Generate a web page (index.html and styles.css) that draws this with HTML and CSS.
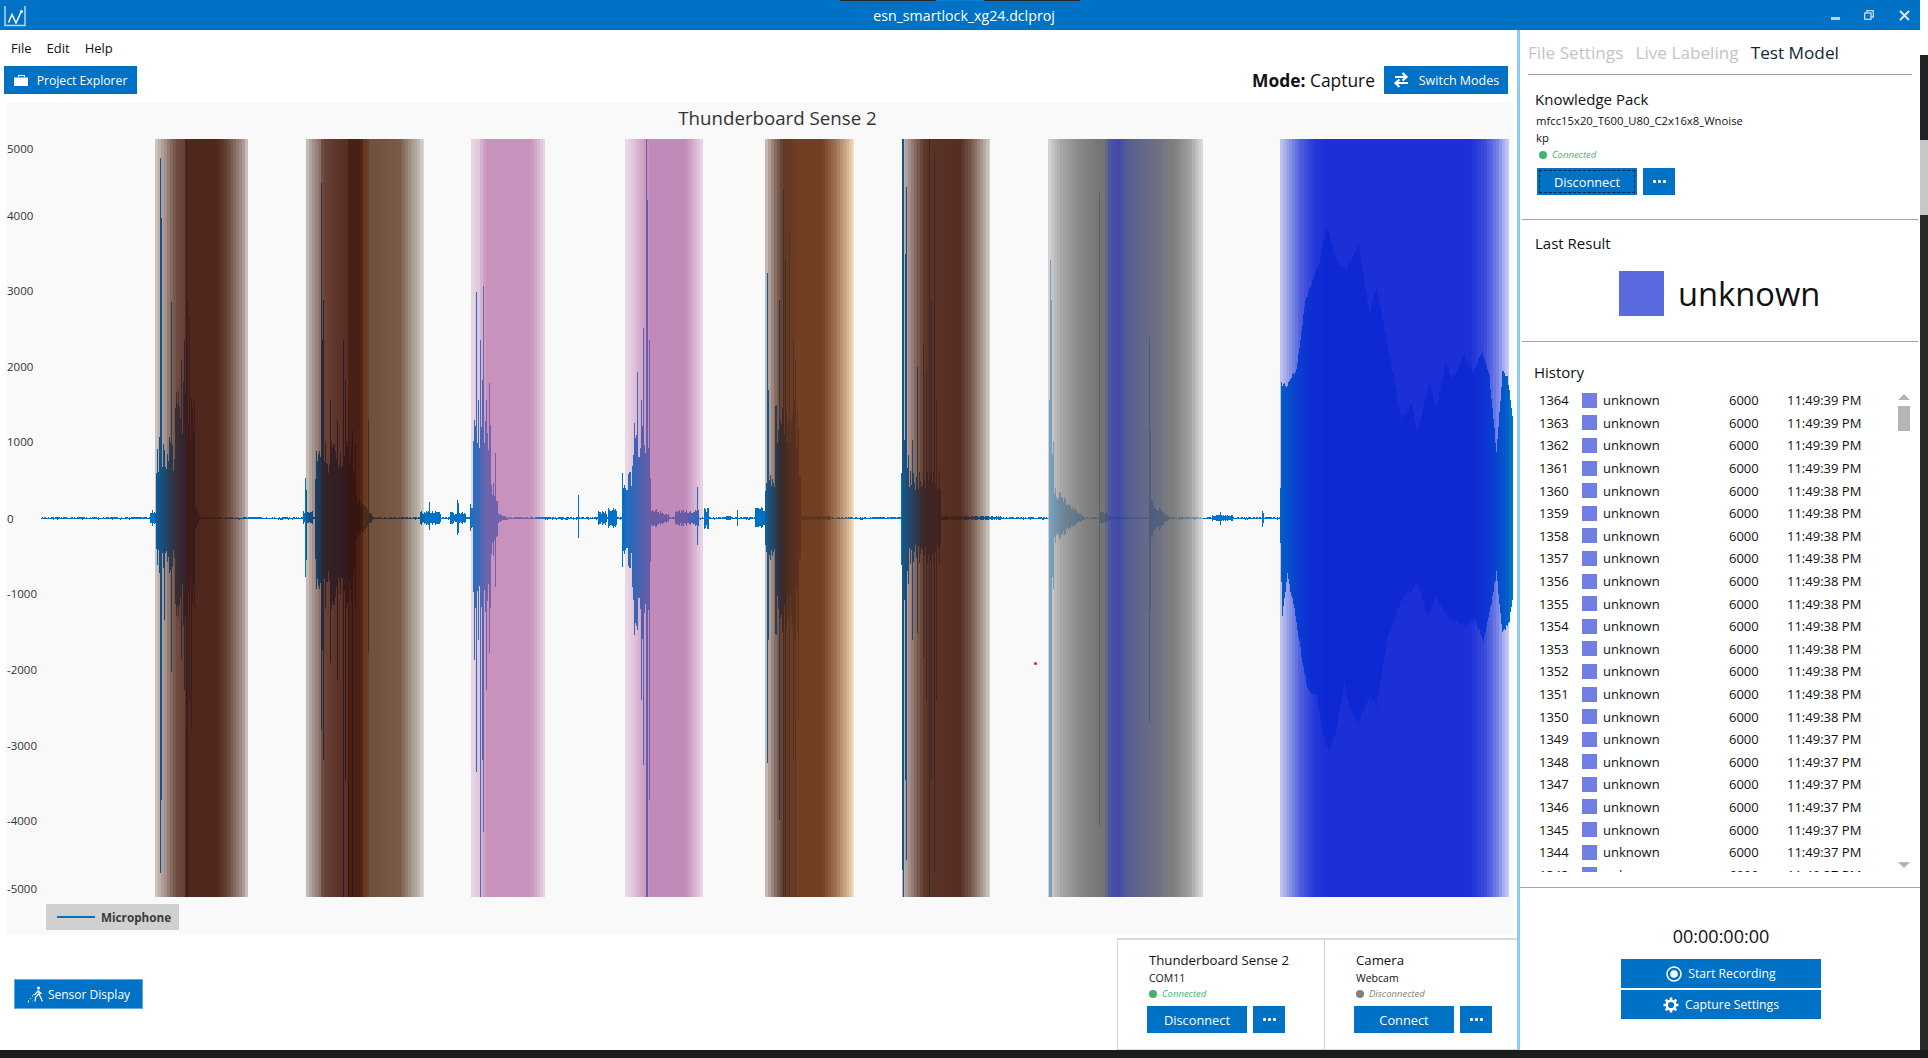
FILE: index.html
```html
<!DOCTYPE html>
<html lang="en">
<head>
    <meta charset="UTF-8">
    <title>esn_smartlock_xg24.dclproj</title>
    <link rel="stylesheet" href="styles.css">
</head>
<body>
    <div class="screen">
        <div class="window">
            <header class="titlebar">
                <svg class="app-logo" viewBox="0 0 22 22" fill="none">
                    <path d="M1 1V20.500H21V1" stroke="#b5d6f0" stroke-width="1.500"/>
                    <path d="M4.500 17.500L8 9.500L12 18L17 7" stroke="#fff" stroke-width="1.500"/>
                    <circle cx="17.500" cy="6.500" r="1.500" fill="#fff"/>
                </svg>
                <div class="title-tabs"><i class="dark"></i><i class="lit"></i><i class="dark"></i></div>
                <span class="title-text">esn_smartlock_xg24.dclproj</span>
                <div class="window-controls">
                    <svg class="win-min" viewBox="0 0 9 3"><rect width="9" height="3" fill="#b9d5ec"/></svg>
                    <svg class="win-restore" viewBox="0 0 10 10" fill="none" stroke="#c5dcef" stroke-width="1.300"><rect x="0.700" y="3" width="6.300" height="6.300"/><path d="M3 3V0.700H9.300V7H7"/></svg>
                    <svg class="win-close" viewBox="0 0 11 11" fill="none" stroke="#d5e6f4" stroke-width="2"><path d="M1 1L10 10M10 1L1 10"/></svg>
                </div>
            </header>

            <div class="workspace">
                <main class="main">
                    <nav class="menu">
                        <span>File</span>
                        <span>Edit</span>
                        <span>Help</span>
                    </nav>

                    <div class="toolbar">
                        <button class="btn btn-explorer">
                            <svg class="icon-case" viewBox="0 0 14 12"><path d="M0 3.500H14V12H0Z M4 3V1H11V3H10V2H5V3Z" fill="#fff"/></svg>
                            Project Explorer
                        </button>
                        <div class="mode">
                            <span class="mode-label"><b>Mode:</b> Capture</span>
                            <button class="btn btn-switch">
                                <svg class="icon-switch" viewBox="0 0 16 16" fill="none" stroke="#fff" stroke-width="2.200"><path d="M2 5H13M9.500 1L13.500 5L9.500 8.500"/><path d="M15 11H3M6.500 7.500L2.500 11L6.500 15"/></svg>
                                Switch Modes
                            </button>
                        </div>
                    </div>

                    <section class="chart" id="chart">
                        <h2 class="chart-title">Thunderboard Sense 2</h2>
                        <div class="legend"><i class="legend-line"></i><b>Microphone</b></div>
                    </section>

                    <div class="bottom-bar">
                        <button class="btn btn-sensor">
                            <svg class="icon-sensor" viewBox="0 0 17 17" fill="none" stroke="#fff" stroke-width="1.200">
                                <circle cx="11.500" cy="2" r="1.500" fill="#fff" stroke="none"/>
                                <path d="M11.500 4.500L8.500 8L6.500 9M11.500 4.500L12.500 9L15.500 15.500M11.500 8L8.500 11.500L8 15.500M11.500 5L14.500 8"/>
                                <path d="M1 15H3M3 12.500H5M5 10H6.500M5.500 15H6M1 16H2" stroke-dasharray="1 1"/>
                            </svg>
                            Sensor Display
                        </button>
                        <div class="devices">
                            <div class="device">
                                <div class="device-name">Thunderboard Sense 2</div>
                                <div class="device-sub">COM11</div>
                                <div class="status on"><i></i>Connected</div>
                                <div class="btn-row">
                                    <button class="btn btn-connect">Disconnect</button>
                                    <button class="btn btn-more"><i></i><i></i><i></i></button>
                                </div>
                            </div>
                            <div class="device device-camera">
                                <div class="device-name">Camera</div>
                                <div class="device-sub">Webcam</div>
                                <div class="status off"><i></i>Disconnected</div>
                                <div class="btn-row">
                                    <button class="btn btn-connect">Connect</button>
                                    <button class="btn btn-more"><i></i><i></i><i></i></button>
                                </div>
                            </div>
                        </div>
                    </div>
                </main>

                <aside class="side">
                    <div class="tabs">
                        <span>File Settings</span>
                        <span>Live Labeling</span>
                        <span class="active">Test Model</span>
                    </div>

                    <section class="kp">
                        <div class="heading">Knowledge Pack</div>
                        <div class="kp-name kp-first">mfcc15x20_T600_U80_C2x16x8_Wnoise</div>
                        <div class="kp-name">kp</div>
                        <div class="status on"><i></i>Connected</div>
                        <div class="btn-row">
                            <button class="btn btn-connect focused">Disconnect</button>
                            <button class="btn btn-more"><i></i><i></i><i></i></button>
                        </div>
                    </section>

                    <section class="last-result">
                        <div class="heading">Last Result</div>
                        <div class="result">
                            <i class="result-swatch"></i>
                            <span>unknown</span>
                        </div>
                    </section>

                    <section class="history">
                        <div class="heading">History</div>
                        <div class="history-list">
                            <div class="row"><span class="c-id">1364</span><i></i><span class="c-label">unknown</span><span class="c-size">6000</span><span>11:49:39 PM</span></div>
                            <div class="row"><span class="c-id">1363</span><i></i><span class="c-label">unknown</span><span class="c-size">6000</span><span>11:49:39 PM</span></div>
                            <div class="row"><span class="c-id">1362</span><i></i><span class="c-label">unknown</span><span class="c-size">6000</span><span>11:49:39 PM</span></div>
                            <div class="row"><span class="c-id">1361</span><i></i><span class="c-label">unknown</span><span class="c-size">6000</span><span>11:49:39 PM</span></div>
                            <div class="row"><span class="c-id">1360</span><i></i><span class="c-label">unknown</span><span class="c-size">6000</span><span>11:49:38 PM</span></div>
                            <div class="row"><span class="c-id">1359</span><i></i><span class="c-label">unknown</span><span class="c-size">6000</span><span>11:49:38 PM</span></div>
                            <div class="row"><span class="c-id">1358</span><i></i><span class="c-label">unknown</span><span class="c-size">6000</span><span>11:49:38 PM</span></div>
                            <div class="row"><span class="c-id">1357</span><i></i><span class="c-label">unknown</span><span class="c-size">6000</span><span>11:49:38 PM</span></div>
                            <div class="row"><span class="c-id">1356</span><i></i><span class="c-label">unknown</span><span class="c-size">6000</span><span>11:49:38 PM</span></div>
                            <div class="row"><span class="c-id">1355</span><i></i><span class="c-label">unknown</span><span class="c-size">6000</span><span>11:49:38 PM</span></div>
                            <div class="row"><span class="c-id">1354</span><i></i><span class="c-label">unknown</span><span class="c-size">6000</span><span>11:49:38 PM</span></div>
                            <div class="row"><span class="c-id">1353</span><i></i><span class="c-label">unknown</span><span class="c-size">6000</span><span>11:49:38 PM</span></div>
                            <div class="row"><span class="c-id">1352</span><i></i><span class="c-label">unknown</span><span class="c-size">6000</span><span>11:49:38 PM</span></div>
                            <div class="row"><span class="c-id">1351</span><i></i><span class="c-label">unknown</span><span class="c-size">6000</span><span>11:49:38 PM</span></div>
                            <div class="row"><span class="c-id">1350</span><i></i><span class="c-label">unknown</span><span class="c-size">6000</span><span>11:49:38 PM</span></div>
                            <div class="row"><span class="c-id">1349</span><i></i><span class="c-label">unknown</span><span class="c-size">6000</span><span>11:49:37 PM</span></div>
                            <div class="row"><span class="c-id">1348</span><i></i><span class="c-label">unknown</span><span class="c-size">6000</span><span>11:49:37 PM</span></div>
                            <div class="row"><span class="c-id">1347</span><i></i><span class="c-label">unknown</span><span class="c-size">6000</span><span>11:49:37 PM</span></div>
                            <div class="row"><span class="c-id">1346</span><i></i><span class="c-label">unknown</span><span class="c-size">6000</span><span>11:49:37 PM</span></div>
                            <div class="row"><span class="c-id">1345</span><i></i><span class="c-label">unknown</span><span class="c-size">6000</span><span>11:49:37 PM</span></div>
                            <div class="row"><span class="c-id">1344</span><i></i><span class="c-label">unknown</span><span class="c-size">6000</span><span>11:49:37 PM</span></div>
                            <div class="row"><span class="c-id">1343</span><i></i><span class="c-label">unknown</span><span class="c-size">6000</span><span>11:49:37 PM</span></div>
                        </div>
                        <div class="scroll">
                            <i class="arrow-up"></i>
                            <i class="thumb"></i>
                            <i class="arrow-down"></i>
                        </div>
                    </section>

                    <section class="capture">
                        <div class="timer">00:00:00:00</div>
                        <button class="btn btn-capture">
                            <svg class="icon-rec" viewBox="0 0 16 16" fill="none"><circle cx="8" cy="8" r="7" stroke="#fff" stroke-width="1.500"/><circle cx="8" cy="8" r="3.800" fill="#fff"/></svg>
                            Start Recording
                        </button>
                        <button class="btn btn-capture">
                            <svg class="icon-gear" viewBox="0 0 16 16" fill="none" stroke="#fff"><circle cx="8" cy="8" r="4.300" stroke-width="2.400"/><path d="M8 0.500V3M8 13V15.500M0.500 8H3M13 8H15.500M2.700 2.700L4.500 4.500M11.500 11.500L13.300 13.300M13.300 2.700L11.500 4.500M4.500 11.500L2.700 13.300" stroke-width="2.600"/></svg>
                            Capture Settings
                        </button>
                    </section>
                </aside>
            </div>
        </div>
        <div class="edge">
            <i class="edge-blank"></i>
            <i class="edge-dark"></i>
            <i class="edge-light"></i>
            <i class="edge-rest"></i>
        </div>
    </div>
    <div class="taskbar"></div>

    <script src="chart.js"></script>
</body>
</html>
```

FILE: styles.css
```css
* {
    box-sizing: border-box;
}
body {
    margin: 0;
    font-family: "Open Sans", "Noto Sans", sans-serif;
    color: #111;
    background: #fff;
    overflow: hidden;
}
button {
    font-family: inherit;
}
.screen {
    display: flex;
    width: 1928px;
    height: 1050px;
}
.window {
    width: 1920px;
    height: 1050px;
    display: flex;
    flex-direction: column;
}
.taskbar {
    width: 1928px;
    height: 8px;
    background: #1c1c1c;
}

/* right hand strip of what is behind the window */
.edge {
    width: 8px;
    display: flex;
    flex-direction: column;
}
.edge i {
    display: block;
}
.edge-blank {
    height: 55px;
    background: #fff;
}
.edge-dark {
    height: 85px;
    background: #222226;
}
.edge-light {
    height: 75px;
    background: #c8c8c8;
}
.edge-rest {
    flex: 1;
    background: #2b2b2b;
}

/* title bar */
.titlebar {
    position: relative;
    height: 30px;
    background: #0072c6;
    color: #fff;
    display: flex;
    align-items: center;
    justify-content: center;
}
.app-logo {
    position: absolute;
    left: 4px;
    top: 5px;
    width: 22px;
    height: 22px;
}
.title-tabs {
    position: absolute;
    left: 840px;
    top: 0;
    display: flex;
    height: 1px;
}
.title-tabs i {
    display: block;
    width: 96px;
}
.title-tabs .dark {
    background: #23282e;
}
.title-tabs .lit {
    width: 48px;
    background: #0a7fd6;
}
.title-text {
    font-size: 14.200px;
    margin-left: 8px;
    margin-top: 1px;
}
.window-controls {
    position: absolute;
    top: 0;
    left: 0;
    width: 100%;
    height: 30px;
}
.win-min {
    position: absolute;
    left: 1831px;
    top: 17px;
    width: 9px;
    height: 3px;
}
.win-restore {
    position: absolute;
    left: 1864px;
    top: 10px;
    width: 10px;
    height: 10px;
}
.win-close {
    position: absolute;
    left: 1899px;
    top: 10px;
    width: 11px;
    height: 11px;
}

.workspace {
    flex: 1;
    display: flex;
    min-height: 0;
}
.main {
    width: 1517px;
    display: flex;
    flex-direction: column;
}

/* menu and toolbar */
.menu {
    height: 36px;
    padding: 0 0 0 11px;
    display: flex;
    gap: 15px;
    align-items: center;
    font-size: 13px;
}
.toolbar {
    height: 28px;
    padding: 0 9px 0 4px;
    display: flex;
    justify-content: space-between;
}
.btn {
    border: none;
    background: #0072c6;
    color: #fff;
    padding: 0;
    display: flex;
    align-items: center;
    justify-content: center;
    font-size: 12.200px;
}
.btn-explorer {
    width: 133px;
    height: 28px;
    gap: 9px;
}
.icon-case {
    width: 14px;
    height: 12px;
}
.mode {
    display: flex;
    align-items: center;
    gap: 9px;
}
.mode-label {
    font-size: 17.400px;
}
.mode-label b {
    font-weight: 700;
}
.btn-switch {
    width: 124px;
    height: 28px;
    gap: 10px;
    font-size: 12.500px;
}
.icon-switch {
    width: 16px;
    height: 16px;
}

/* chart */
.chart {
    position: relative;
    width: 1508px;
    height: 832px;
    margin: 9px 0 0 6px;
    background: #f9f9f9;
}
.chart-title {
    position: absolute;
    left: 0;
    top: 0;
    width: 1543px;
    margin: 0;
    padding-top: 2px;
    text-align: center;
    font-size: 18.700px;
    font-weight: 400;
    color: #333;
}
.plot {
    position: absolute;
    left: 0;
    top: 0;
    width: 1508px;
    height: 832px;
}
.tick {
    position: absolute;
    left: 1px;
    font-size: 11.500px;
    line-height: 16px;
    color: #333;
}
.red-dot {
    position: absolute;
    width: 3px;
    height: 3px;
    border-radius: 50%;
    background: #f01020;
}
.legend {
    position: absolute;
    left: 40px;
    top: 801px;
    width: 133px;
    height: 26px;
    background: #d0d0d0;
    display: flex;
    align-items: center;
    gap: 6px;
    padding-left: 11px;
    font-size: 11.700px;
    color: #3a3a3a;
}
.legend-line {
    width: 38px;
    height: 2px;
    background: #0072c6;
}

/* bottom bar */
.bottom-bar {
    flex: 1;
    display: flex;
    justify-content: space-between;
    align-items: flex-end;
}
.btn-sensor {
    width: 129px;
    height: 30px;
    margin: 0 0 41px 14px;
    gap: 4px;
    border: 1px solid #5ea9e0;
    font-size: 12px;
}
.icon-sensor {
    width: 17px;
    height: 17px;
}
.devices {
    width: 400px;
    height: 112px;
    display: flex;
    border-top: 2px solid #d8d8d8;
    border-left: 1px solid #d8d8d8;
    border-bottom: 1px solid #d8d8d8;
}
.device {
    width: 207px;
    padding: 11px 0 0 31px;
    border-right: 1px solid #d4d4d4;
}
.device-camera {
    flex: 1;
    border-right: none;
}
.device-name {
    font-size: 13.200px;
    line-height: 19px;
}
.device-sub {
    font-size: 10.500px;
    line-height: 15px;
    margin-top: 1px;
}
.status {
    display: flex;
    align-items: center;
    gap: 5px;
    font-size: 9.500px;
    font-style: italic;
    line-height: 15px;
}
.status i {
    width: 8px;
    height: 8px;
    border-radius: 50%;
}
.status.on {
    color: #3cb371;
}
.status.on i {
    background: #3cb371;
}
.status.off {
    color: #808080;
}
.status.off i {
    background: #808080;
}
.btn-row {
    display: flex;
    gap: 6px;
}
.device .btn-row {
    margin: 5px 0 0 -2px;
}
.btn-connect {
    width: 100px;
    height: 27px;
    font-size: 12.800px;
}
.focused {
    outline: 1px dashed #06243c;
    outline-offset: -3px;
}
.btn-more {
    width: 32px;
    height: 27px;
    gap: 2px;
}
.btn-more i {
    width: 3px;
    height: 3px;
    background: #fff;
    border-radius: 1px;
}

/* right panel */
.side {
    width: 403px;
    border-left: 3px solid #8ccbf2;
    display: flex;
    flex-direction: column;
}
.tabs {
    height: 45px;
    margin: 0 8px;
    display: flex;
    gap: 12px;
    align-items: center;
    font-size: 17.200px;
    color: #c4c4c4;
    border-bottom: 1px solid #a0a0a0;
}
.tabs .active {
    color: #10263a;
}
.heading {
    font-size: 15px;
    line-height: 20px;
}
.kp {
    height: 145px;
    padding: 14px 0 0 13px;
    margin: 0 2px;
    border-bottom: 1px solid #a4a4a4;
}
.kp-name {
    font-size: 11.300px;
    line-height: 18px;
    margin-left: 1px;
}
.kp-first {
    margin-top: 3px;
    line-height: 17px;
}
.kp .status {
    margin: 1px 0 0 4px;
    line-height: 14px;
}
.kp .btn-row {
    margin: 6px 0 0 2px;
}
.last-result {
    height: 122px;
    padding: 13px 0 0 13px;
    margin: 0 2px;
    border-bottom: 1px solid #a4a4a4;
}
.result {
    display: flex;
    align-items: center;
    gap: 14px;
    margin: 17px 0 0 84px;
    font-size: 32.700px;
    line-height: 45px;
}
.result span {
    margin-top: 1px;
}
.result-swatch {
    width: 45px;
    height: 45px;
    background: #5a6be0;
}
.history {
    position: relative;
    height: 546px;
    padding: 20px 0 0 15px;
    border-bottom: 1px solid #a4a4a4;
}
.history .heading {
    margin-left: -1px;
}
.history-list {
    margin: 7px 0 0 -15px;
    height: 483px;
    overflow: hidden;
}
.row {
    display: flex;
    align-items: center;
    height: 22.600px;
    padding-left: 19px;
    font-size: 13px;
}
.row i {
    width: 15px;
    height: 15px;
    background: #717fe4;
    margin-right: 6px;
}
.c-id {
    width: 43px;
}
.c-label {
    width: 126px;
}
.c-size {
    width: 58px;
}
.scroll i {
    position: absolute;
    right: 10px;
    display: block;
}
.thumb {
    top: 64px;
    width: 12px;
    height: 25px;
    background: #b4b4b4;
}
.arrow-up {
    top: 52px;
    border-left: 6px solid transparent;
    border-right: 6px solid transparent;
    border-bottom: 6px solid #b4b4b4;
}
.arrow-down {
    top: 520px;
    border-left: 6px solid transparent;
    border-right: 6px solid transparent;
    border-top: 6px solid #b4b4b4;
}
.capture {
    flex: 1;
    display: flex;
    flex-direction: column;
    align-items: center;
    gap: 2px;
    padding: 36px 0 0 2px;
}
.timer {
    font-size: 18px;
    line-height: 24px;
    margin-bottom: 9px;
}
.btn-capture {
    width: 200px;
    height: 29px;
    gap: 6px;
    font-size: 12.200px;
}
.icon-rec,
.icon-gear {
    width: 16px;
    height: 16px;
}
```

FILE: chart.js
```js
// Draws the capture chart: waveform below, the label bands on top of it
var SVG_NS = 'http://www.w3.org/2000/svg';
var chart = document.getElementById('chart');
var MID = 518;
var LEFT = 41, RIGHT = 1512;

// small seeded random so the wave is the same on every load
var seed = 12345;
function rnd() {
    seed = (seed * 16807) % 2147483647;
    return seed / 2147483647;
}

var tops = {}, bots = {};
for (var x = LEFT; x <= RIGHT; x++) {
    tops[x] = MID - rnd() * 1.4;
    bots[x] = MID + 0.6 + rnd();
}

function spike(x, top, bot) {
    tops[x] = Math.min(tops[x], top);
    bots[x] = Math.max(bots[x], bot);
}

// jagged block of columns between x0 and x1, shrinking by fade at the end
function burst(x0, x1, top, bot, fade) {
    for (var x = x0; x <= x1; x++) {
        var f = fade ? 1 - (x - x0) / (x1 - x0) * fade : 1;
        var r = 0.55 + rnd() * 0.45;
        spike(x, MID - (MID - top) * f * r, MID + (bot - MID) * f * r);
    }
}

// first event
burst(150, 156, 510, 526);
burst(156, 175, 437, 573);
burst(175, 194, 380, 626);
burst(194, 200, 500, 535, 0.9);
spike(160, 158, 873); spike(161, 218, 800); spike(171, 302, 672);
spike(186, 139, 897); spike(189, 317, 700); spike(164, 450, 620);
spike(181, 360, 660); spike(184, 340, 690); spike(191, 400, 730); spike(187, 300, 897);
// second event
burst(303, 312, 510, 525);
spike(305, 478, 577); spike(306, 490, 560);
burst(315, 325, 450, 590);
burst(325, 355, 440, 610);
burst(355, 372, 490, 545, 0.9);
spike(321, 183, 730); spike(322, 340, 650); spike(330, 400, 663);
spike(343, 340, 897); spike(348, 400, 897); spike(352, 430, 897); spike(368, 420, 653);
spike(323, 300, 760); spike(337, 420, 680); spike(345, 380, 780);
burst(420, 440, 511, 525);
burst(450, 465, 512, 524);
spike(429, 502, 530); spike(457, 500, 535); spike(458, 503, 533);
// third event
burst(470, 474, 500, 535);
burst(473, 490, 420, 613);
burst(490, 497, 470, 570, 0.6);
burst(497, 505, 512, 524, 0.7);
spike(476, 292, 772); spike(483, 286, 832); spike(480, 340, 897);
spike(489, 383, 653); spike(495, 453, 587); spike(478, 400, 640);
spike(474, 420, 660); spike(486, 400, 690); spike(482, 380, 760);
spike(578, 495, 538);
burst(598, 606, 511, 525);
burst(608, 616, 507, 529);
// fourth event
burst(622, 650, 470, 570);
burst(632, 648, 425, 640);
burst(650, 668, 507, 530, 0.6);
burst(675, 698, 510, 526);
spike(634, 423, 603); spike(646, 139, 897); spike(647, 200, 897);
spike(643, 328, 765); spike(637, 372, 630); spike(697, 487, 545);
spike(649, 340, 800); spike(641, 400, 700);
burst(704, 708, 507, 530);
burst(725, 730, 516, 520); spike(737, 510, 526);
// fifth event
burst(755, 765, 507, 528);
burst(765, 800, 470, 565);
burst(775, 798, 400, 640);
spike(767, 273, 763); spike(768, 390, 640); spike(783, 190, 897); spike(785, 260, 897);
spike(793, 340, 760); spike(798, 430, 720); spike(800, 480, 553);
spike(779, 300, 820); spike(789, 230, 897); spike(795, 360, 897);
burst(800, 830, 516, 520);
// sixth event
burst(901, 908, 440, 600);
burst(908, 940, 470, 565);
spike(902, 139, 870); spike(903, 139, 897); spike(905, 254, 780); spike(906, 187, 860);
spike(917, 367, 633); spike(923, 345, 658); spike(929, 139, 897); spike(934, 153, 873);
spike(936, 400, 700); spike(912, 440, 640); spike(926, 370, 700); spike(931, 300, 780);
burst(940, 1000, 516, 520);
// seventh event
burst(1049, 1053, 440, 590);
spike(1049, 400, 897); spike(1050, 260, 897); spike(1051, 300, 897);
burst(1053, 1085, 485, 545, 1);
spike(1099, 193, 827);
burst(1100, 1115, 510, 525, 1);
spike(1149, 337, 723); spike(1150, 430, 610);
burst(1150, 1170, 498, 540, 1);
burst(1212, 1232, 515, 521);
spike(1220, 512, 525); spike(1262, 511, 527); spike(1263, 513, 523);

// last event has a shape of its own: [x, y] outline for above and below the line
var upper = [[1280, 487], [1281, 382], [1287, 383], [1296, 367], [1305, 297], [1319, 260], [1326, 223],
    [1337, 260], [1346, 267], [1358, 242], [1369, 310], [1376, 283], [1388, 347], [1401, 417], [1411, 403],
    [1417, 430], [1429, 380], [1436, 407], [1445, 360], [1452, 377], [1463, 353], [1473, 370], [1482, 350],
    [1489, 373], [1496, 450], [1502, 370], [1507, 373], [1512, 413]];
var lower = [[1280, 547], [1282, 617], [1287, 577], [1294, 613], [1303, 670], [1307, 692], [1317, 700],
    [1321, 730], [1328, 755], [1335, 737], [1344, 687], [1349, 710], [1358, 725], [1369, 700], [1376, 708],
    [1388, 637], [1401, 603], [1417, 585], [1427, 618], [1436, 600], [1447, 620], [1461, 627], [1475, 622],
    [1483, 643], [1491, 607], [1496, 575], [1502, 637], [1509, 623], [1512, 603]];

function outlineAt(points, x) {
    for (var i = 0; i < points.length - 1; i++) {
        if (x >= points[i][0] && x <= points[i + 1][0]) {
            var t = (x - points[i][0]) / (points[i + 1][0] - points[i][0]);
            return points[i][1] + (points[i + 1][1] - points[i][1]) * t;
        }
    }
    return MID;
}

for (x = 1280; x <= RIGHT; x++) {
    spike(x, outlineAt(upper, x) + rnd() * 5, outlineAt(lower, x) - rnd() * 5);
}

// label bands. stops are [x, colour as seen on the chart background], k is how much they hide the wave
var BANDS = [
    { k: 0.92, stops: [[155, '#d3cbc8'], [161, '#b5a5a0'], [166, '#a08d87'], [170, '#8a6f66'], [177, '#6f4a3d'], [184, '#65403a'], [187, '#50271d'], [216, '#50271d'], [226, '#63402f'], [236, '#8a7066'], [243, '#a8968f'], [248, '#d8d0ce']] },
    { k: 0.92, stops: [[306, '#d0c8c4'], [312, '#a89890'], [320, '#8a6f66'], [323, '#6a4436'], [335, '#5f3527'], [347, '#5a2f22'], [349, '#4b200f'], [361, '#4b200f'], [363, '#6a3614'], [367, '#6a3a18'], [370, '#6e4e38'], [400, '#775a42'], [410, '#a09080'], [418, '#bcb0a4'], [424, '#dcdcd8']] },
    { k: 0.65, stops: [[471, '#e8d8e6'], [478, '#e2cade'], [486, '#c892bd'], [531, '#c892bd'], [537, '#d5b0cd'], [545, '#e8d8e6']] },
    { k: 0.65, stops: [[625, '#ecdcea'], [634, '#e0c4da'], [649, '#c28ab9'], [685, '#c28ab9'], [694, '#d5b0cd'], [703, '#eadaea']] },
    { k: 0.92, stops: [[765, '#cfc5c0'], [775, '#8a7066'], [783, '#5d3a2c'], [790, '#673a20'], [800, '#733f22'], [822, '#733f22'], [835, '#9c7050'], [848, '#d5b594'], [854, '#f5e3cc']] },
    { k: 0.92, stops: [[902, '#c5b9b5'], [910, '#a08a83'], [917, '#7d5f55'], [925, '#5a3428'], [960, '#552c20'], [972, '#7a5c50'], [982, '#a89890'], [990, '#d6cfcc']] },
    { k: 0.95, p: 0.25, stops: [[1048, '#d8d8d8'], [1060, '#a8a8a8'], [1080, '#888'], [1100, '#747474'], [1104, '#747474'], [1110, '#4a549f'], [1118, '#3f4aa8'], [1128, '#555e92'], [1140, '#5f668a'], [1155, '#6b6e80'], [1175, '#808080'], [1190, '#a0a0a0'], [1203, '#e0e0e0']] },
    { k: 0.95, stops: [[1280, '#c4c9ef'], [1290, '#8a94e6'], [1300, '#5060e0'], [1315, '#2336d8'], [1325, '#1b30d6'], [1470, '#1b30d6'], [1485, '#3a4cdc'], [1497, '#7480e6'], [1509, '#d0d4f5']] }
];
var BAND_TOP = 139, BAND_BOTTOM = 897, STEP = 3, BG = 249;

function hexToRgb(hex) {
    if (hex.length === 4) {
        hex = '#' + hex[1] + hex[1] + hex[2] + hex[2] + hex[3] + hex[3];
    }
    return [1, 3, 5].map(function (i) { return parseInt(hex.substr(i, 2), 16); });
}

function colourAt(stops, x) {
    for (var i = 0; i < stops.length - 1; i++) {
        if (x <= stops[i + 1][0]) {
            var t = Math.max(0, (x - stops[i][0]) / (stops[i + 1][0] - stops[i][0]));
            var a = hexToRgb(stops[i][1]), b = hexToRgb(stops[i + 1][1]);
            return a.map(function (v, n) { return v + (b[n] - v) * t; });
        }
    }
    return hexToRgb(stops[stops.length - 1][1]);
}

var svg = document.createElementNS(SVG_NS, 'svg');
svg.setAttribute('class', 'plot');
svg.setAttribute('viewBox', '6 103 1508 832');

function add(tag, attrs) {
    var el = document.createElementNS(SVG_NS, tag);
    for (var name in attrs) {
        el.setAttribute(name, attrs[name]);
    }
    svg.appendChild(el);
}

var d = '';
for (x = LEFT; x <= RIGHT; x++) {
    d += 'M' + (x + 0.5) + ' ' + tops[x].toFixed(0) + 'V' + bots[x].toFixed(0);
}
add('path', { d: d, stroke: '#0072c6', 'stroke-width': 1, 'shape-rendering': 'crispEdges', fill: 'none' });

BANDS.forEach(function (band) {
    var darkest = BG;
    band.stops.forEach(function (s) {
        darkest = Math.min(darkest, Math.min.apply(null, hexToRgb(s[1])));
    });
    var first = band.stops[0][0], last = band.stops[band.stops.length - 1][0];
    for (var bx = first; bx < last; bx += STEP) {
        var w = Math.min(STEP, last - bx);
        var seen = colourAt(band.stops, bx + w / 2);
        // alpha grows with how far the step is from the background
        var ratio = Math.min(1, (BG - Math.min.apply(null, seen)) / (BG - darkest));
        var alpha = Math.max(0.08, band.k * Math.pow(ratio, band.p || 1));
        var rgb = seen.map(function (v) {
            return Math.max(0, Math.min(255, Math.round((v - (1 - alpha) * BG) / alpha)));
        });
        add('rect', {
            x: bx, y: BAND_TOP, width: w, height: BAND_BOTTOM - BAND_TOP,
            fill: 'rgb(' + rgb.join(',') + ')', 'fill-opacity': alpha.toFixed(3),
            'shape-rendering': 'crispEdges'
        });
    }
});
chart.insertBefore(svg, chart.firstChild);

// y axis, the chart's own spacing is not even
var TICKS = [[5000, 149], [4000, 216], [3000, 291], [2000, 367], [1000, 442], [0, 519],
    [-1000, 594], [-2000, 670], [-3000, 746], [-4000, 821], [-5000, 889]];
TICKS.forEach(function (tick) {
    var label = document.createElement('span');
    label.className = 'tick';
    label.textContent = tick[0];
    label.style.top = (tick[1] - 103 - 8) + 'px';
    chart.appendChild(label);
});

var dot = document.createElement('i');
dot.className = 'red-dot';
dot.style.left = (1034 - 6) + 'px';
dot.style.top = (662 - 103) + 'px';
chart.appendChild(dot);
```
